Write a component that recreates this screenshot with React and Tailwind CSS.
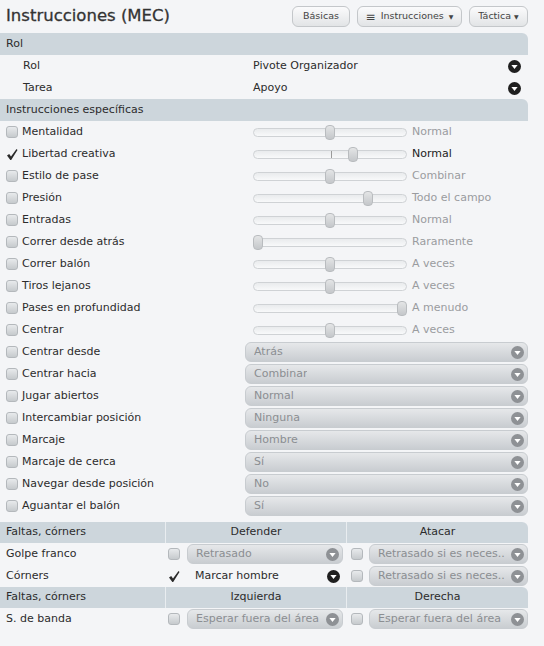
import React from 'react';

const font = { fontFamily: '"DejaVu Sans", Verdana, sans-serif' };

const Circle = ({ dark }) => (
  <svg width="13" height="13" viewBox="0 0 13 13" className="shrink-0">
    <circle cx="6.5" cy="6.5" r="6.5" fill={dark ? '#1f1f1f' : '#8e9195'} />
    <path d="M3.4 5 L9.6 5 L6.5 9 Z" fill="#fff" />
  </svg>
);

const Check = ({ checked }) =>
  checked ? (
    <svg width="12" height="13" viewBox="0 0 12 13" className="shrink-0">
      <path d="M1 7.5 L3.2 6 L5 8.6 L10.5 1 L11.5 2 L5.2 12 L4.3 12 Z" fill="#2a2a2a" />
    </svg>
  ) : (
    <span className="block w-3 h-3 shrink-0 rounded-[3px] border border-[#b4b8bc] bg-gradient-to-b from-[#e8eaec] to-[#c6cacd]" />
  );

const Header = ({ children }) => (
  <div className="h-[22px] flex items-center px-[6px] bg-[#cdd6dc] text-[#2c2c2c] rounded-tr-md">{children}</div>
);

const Slider = ({ pos, tick }) => (
  <div className="relative w-[154px] h-[9px] rounded-full border border-[#cfd2d5] bg-gradient-to-b from-[#e9ebed] to-[#f8f9fa] shrink-0">
    {tick != null && <div className="absolute top-0 w-px h-[7px] bg-[#9a9a9a]" style={{ left: tick }} />}
    <div
      className="absolute top-[-4px] w-[10px] h-[15px] rounded-[4px] border border-[#b9bcbf] bg-gradient-to-b from-[#e4e5e6] to-[#c4c7ca]"
      style={{ left: pos - 5 }}
    />
  </div>
);

const Select = ({ value, className = '' }) => (
  <div
    className={`h-[20px] flex items-center justify-between pl-2 pr-[3px] rounded-md border border-[#c8ccd0] bg-gradient-to-b from-[#e6e8ea] to-[#c9cdd1] ${className}`}
  >
    <span className="truncate text-[#8b8e92]">{value}</span>
    <Circle />
  </div>
);

const sliders = [
  ['Mentalidad', 76, 'Normal'],
  ['Libertad creativa', 99, 'Normal', true, 77],
  ['Estilo de pase', 76, 'Combinar'],
  ['Presión', 114, 'Todo el campo'],
  ['Entradas', 76, 'Normal'],
  ['Correr desde atrás', 4, 'Raramente'],
  ['Correr balón', 76, 'A veces'],
  ['Tiros lejanos', 76, 'A veces'],
  ['Pases en profundidad', 148, 'A menudo'],
  ['Centrar', 76, 'A veces'],
];

const selects = [
  ['Centrar desde', 'Atrás'],
  ['Centrar hacia', 'Combinar'],
  ['Jugar abiertos', 'Normal'],
  ['Intercambiar posición', 'Ninguna'],
  ['Marcaje', 'Hombre'],
  ['Marcaje de cerca', 'Sí'],
  ['Navegar desde posición', 'No'],
  ['Aguantar el balón', 'Sí'],
];

const TableHeader = ({ a, b }) => (
  <div className="h-[21px] flex items-center bg-[#cdd6dc] text-[#2c2c2c] rounded-tr-md">
    <div className="w-[166px] px-[6px] h-full flex items-center border-r border-[#e9edf0]">Faltas, córners</div>
    <div className="w-[181px] h-full flex items-center justify-center border-r border-[#e9edf0]">{a}</div>
    <div className="flex-1 h-full flex items-center justify-center">{b}</div>
  </div>
);

const btn = 'h-[21px] rounded-md border border-[#c4c7ca] bg-gradient-to-b from-[#fbfbfc] to-[#e2e4e6] flex items-center justify-center';

const App = () => {
  return (
    <div className="w-[544px] h-[646px] bg-[#f4f5f7] text-[11px] text-[#2c2c2c]" style={font}>
      <div className="w-[528px]">
        <div className="h-[33px] flex items-center justify-between pl-[6px]">
          <div className="text-[16.5px] text-[#333] [-webkit-text-stroke:0.3px_#333]">Instrucciones (MEC)</div>
          <div className="flex gap-[7px] text-[9.5px] text-[#444]">
            <button className={`${btn} w-[58px]`}>Básicas</button>
            <button className={`${btn} w-[105px] gap-[5px]`}>
              <span className="text-[12px] leading-none">≡</span> Instrucciones <span className="text-[6px]">▼</span>
            </button>
            <button className={`${btn} w-[59px] gap-[3px]`}>
              Táctica <span className="text-[6px]">▼</span>
            </button>
          </div>
        </div>

        <Header>Rol</Header>
        <div className="h-[22px] flex items-center pl-[23px] pr-[7px]">
          <span className="w-[230px]">Rol</span>
          <span className="flex-1">Pivote Organizador</span>
          <Circle dark />
        </div>
        <div className="h-[22px] flex items-center pl-[23px] pr-[7px]">
          <span className="w-[230px]">Tarea</span>
          <span className="flex-1">Apoyo</span>
          <Circle dark />
        </div>
        <Header>Instrucciones específicas</Header>

        {sliders.map(([label, pos, value, on, tick]) => (
          <div key={label} className="h-[22px] flex items-center pl-[6px]">
            <Check checked={on} />
            <span className="ml-[4px] w-[231px] shrink-0">{label}</span>
            <Slider pos={pos} tick={tick} />
            <span className={`ml-[5px] ${on ? 'text-[#222]' : 'text-[#9a9c9f]'}`}>{value}</span>
          </div>
        ))}
        {selects.map(([label, value]) => (
          <div key={label} className="h-[22px] flex items-center pl-[6px]">
            <Check />
            <span className="ml-[4px] w-[223px] shrink-0">{label}</span>
            <Select value={value} className="flex-1" />
          </div>
        ))}

        <div className="h-[5px]" />
        <TableHeader a="Defender" b="Atacar" />
        <div className="h-[22px] flex items-center">
          <span className="w-[168px] pl-[6px] shrink-0">Golpe franco</span>
          <Check />
          <Select value="Retrasado" className="ml-[7px] w-[156px]" />
          <div className="ml-[8px] flex"><Check /></div>
          <Select value="Retrasado si es neces.." className="ml-[6px] flex-1" />
        </div>
        <div className="h-[22px] flex items-center">
          <span className="w-[168px] pl-[6px] shrink-0">Córners</span>
          <Check checked />
          <div className="ml-[7px] w-[156px] pl-[8px] pr-[3px] flex items-center justify-between">
            <span>Marcar hombre</span>
            <Circle dark />
          </div>
          <div className="ml-[8px] flex"><Check /></div>
          <Select value="Retrasado si es neces.." className="ml-[6px] flex-1" />
        </div>
        <TableHeader a="Izquierda" b="Derecha" />
        <div className="h-[22px] flex items-center">
          <span className="w-[168px] pl-[6px] shrink-0">S. de banda</span>
          <Check />
          <Select value="Esperar fuera del área" className="ml-[7px] w-[156px]" />
          <div className="ml-[8px] flex"><Check /></div>
          <Select value="Esperar fuera del área" className="ml-[6px] flex-1" />
        </div>
      </div>
    </div>
  );
};

export default App;
